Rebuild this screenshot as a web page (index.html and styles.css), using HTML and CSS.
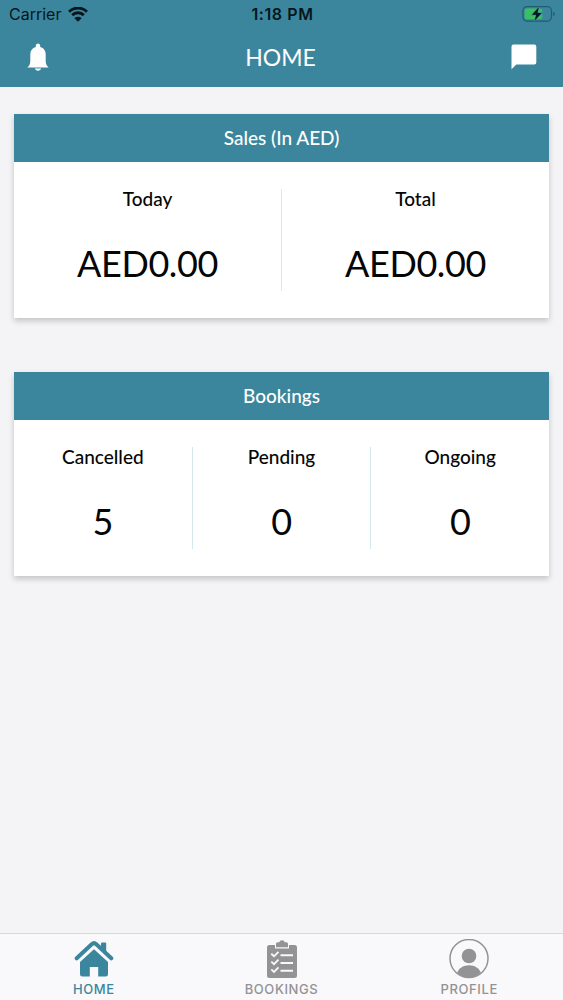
FILE: index.html
```
<!DOCTYPE html>
<html lang="en">
<head>
    <meta charset="UTF-8">
    <meta name="viewport" content="width=device-width, initial-scale=1.0">
    <title>Home</title>
    <link rel="stylesheet" href="styles.css">
</head>
<body>
    <header class="header">
        <!-- Status bar -->
        <div class="status-bar">
            <div class="carrier">
                <span>Carrier</span>
                <svg width="20" height="15" viewBox="0 0 20 15">
                    <path d="M1 4.800a12.700 12.700 0 0 1 18 0M4.200 8.100a8.200 8.200 0 0 1 11.600 0" fill="none" stroke="#06161b" stroke-width="2.900"/>
                    <path d="M10 14.800L6.400 11.200a5.200 5.200 0 0 1 7.200 0z" fill="#06161b"/>
                </svg>
            </div>
            <span class="time">1:18 PM</span>
            <svg class="battery" width="34" height="16" viewBox="0 0 34 16">
                <rect x=".9" y=".7" width="28.6" height="14.4" rx="4" fill="none" stroke="#245a72" stroke-width="1.2"/>
                <path d="M31.2 5.8v4.4q1.6-.6 1.6-2.2t-1.600-2.200z" fill="#245a72"/>
                <rect x="2.7" y="2.500" width="17.500" height="10.800" rx="2" fill="#38c160"/>
                <path d="M16.8 1.2L10 8.8h4.3l-1.6 5.8 7-7.7h-4.3z" fill="#06161b" stroke="#3b879e" stroke-width="1.2" paint-order="stroke"/>
            </svg>
        </div>

        <!-- Navigation bar -->
        <div class="nav-bar">
            <svg width="24" height="30" viewBox="0 0 24 30">
                <path d="M12 1.5c1.3 0 2.2 1 2.2 2.2v1.4c3.6.9 5.5 3.8 5.5 7.4v6.2c0 3.4 1 5.2 3 6.8H1.3c2-1.6 3-3.4 3-6.8v-6.2c0-3.6 1.9-6.5 5.5-7.4V3.700c0-1.200.9-2.200 2.200-2.200zM8.900 26.600h6.200c-.4 1.300-1.600 2.200-3.100 2.200s-2.700-.9-3.100-2.200z" fill="#fff"/>
            </svg>
            <h1>HOME</h1>
            <svg width="26" height="26" viewBox="0 0 26 26">
                <path d="M2.500.5h20.800a2 2 0 0 1 2 2v16a2 2 0 0 1-2 2H5.300L.5 25.300V2.500a2 2 0 0 1 2-2z" fill="#fff"/>
            </svg>
        </div>
    </header>

    <main>
        <!-- Sales -->
        <section class="card">
            <h2>Sales (In AED)</h2>
            <div class="stats">
                <div class="stat">
                    <h3>Today</h3>
                    <p>AED0.00</p>
                </div>
                <div class="stat">
                    <h3>Total</h3>
                    <p>AED0.00</p>
                </div>
            </div>
        </section>

        <!-- Bookings -->
        <section class="card">
            <h2>Bookings</h2>
            <div class="stats">
                <div class="stat">
                    <h3>Cancelled</h3>
                    <p>5</p>
                </div>
                <div class="stat">
                    <h3>Pending</h3>
                    <p>0</p>
                </div>
                <div class="stat">
                    <h3>Ongoing</h3>
                    <p>0</p>
                </div>
            </div>
        </section>
    </main>

    <!-- Tab bar -->
    <nav class="tab-bar">
        <a class="tab active">
            <svg width="40" height="40" viewBox="0 0 40 40">
                <path d="M27 4.500a1 1 0 0 1 1-1h3.200a1 1 0 0 1 1 1v9L27 8.500z" fill="currentColor"/>
                <path d="M2.700 19.300L17.700 5.200q2.300-2.100 4.600 0l15 14.100" fill="none" stroke="currentColor" stroke-width="4" stroke-linecap="round" stroke-linejoin="round"/>
                <path d="M20 10.200L34 23v12a2.500 2.500 0 0 1-2.500 2.500H24.200v-9.500h-8.400v9.500H8.500A2.500 2.500 0 0 1 6 35V23z" fill="currentColor"/>
            </svg>
            <span>HOME</span>
        </a>
        <a class="tab">
            <svg width="40" height="40" viewBox="0 0 40 40">
                <path d="M7.500 6H13v3.500h14V6h5.500A2.500 2.500 0 0 1 35 8.500v28a2.500 2.500 0 0 1-2.500 2.500h-25A2.500 2.500 0 0 1 5 36.500v-28A2.500 2.500 0 0 1 7.500 6z" fill="currentColor"/>
                <path d="M14 8.300V4.800a1.500 1.500 0 0 1 1.500-1.500h1.700a2.900 2.900 0 0 1 5.600 0h1.700A1.500 1.500 0 0 1 26 4.800v3.500z" fill="currentColor"/>
                <path d="M9.300 14.800l2.700 2.500 4.500-4.500M9.300 22.600l2.700 2.500 4.500-4.500M9.300 30.400l2.700 2.500 4.500-4.500M18.500 16.200H31M18.500 24H31M18.500 31.800H31" fill="none" stroke="#f9f8fa" stroke-width="1.900"/>
            </svg>
            <span>BOOKINGS</span>
        </a>
        <a class="tab">
            <svg width="40" height="40" viewBox="0 0 40 40">
                <circle cx="20" cy="19.500" r="19" fill="none" stroke="currentColor" stroke-width="1.500"/>
                <circle cx="20" cy="17" r="7.300" fill="currentColor"/>
                <path d="M8.200 33.700C10 29 14.500 26.300 20 26.300s10 2.700 11.800 7.400A18.500 18.500 0 0 1 20 38.500a18.500 18.500 0 0 1-11.800-4.800z" fill="currentColor"/>
            </svg>
            <span>PROFILE</span>
        </a>
    </nav>
</body>
</html>
```
FILE: styles.css
```
* {
    box-sizing: border-box;
}

body {
    display: flex;
    flex-direction: column;
    height: 1000px;
    margin: 0;
    background-color: #f4f3f5;
    font-family: Lato, sans-serif;
    color: #050505;
}

h1, h2, h3, p {
    margin: 0;
}

svg {
    display: block;
}

/* Header */
.header {
    height: 87px;
    background-color: #3b869d;
}

.status-bar {
    display: grid;
    grid-template-columns: 1fr auto 1fr;
    align-items: center;
    height: 28px;
    padding: 0 7px 0 9px;
    font-family: Inter, sans-serif;
    font-size: 16px;
    color: #06161b;
}

.carrier {
    display: flex;
    align-items: center;
    gap: 7px;
}

.time {
    font-weight: 600;
    letter-spacing: 0.6px;
}

.battery {
    justify-self: end;
}

.nav-bar {
    display: flex;
    justify-content: space-between;
    align-items: center;
    height: 57px;
    padding: 0 26px;
}

.nav-bar h1 {
    font-size: 23px;
    font-weight: 400;
    color: #fff;
}

/* Cards */
main {
    flex: 1;
    display: flex;
    flex-direction: column;
    gap: 54px;
    padding: 27px 14px;
}

.card {
    height: 204px;
    background-color: #fff;
    box-shadow: 0 3px 6px rgba(0, 0, 0, 0.2);
}

.card h2 {
    height: 48px;
    background-color: #3b869d;
    color: #fff;
    font-size: 19px;
    font-weight: 500;
    line-height: 48px;
    text-align: center;
}

.stats {
    display: flex;
    padding: 27px 0;
}

.stat {
    flex: 1;
    height: 102px;
    text-align: center;
}

.stat + .stat {
    border-left: 1px solid #d5e8f0;
}

.stat h3 {
    font-size: 19px;
    font-weight: 500;
    line-height: 20px;
}

.stat p {
    margin-top: 32px;
    font-size: 36px;
    line-height: 44px;
    letter-spacing: -0.4px;
}

/* Tab bar */
.tab-bar {
    display: flex;
    height: 67px;
    border-top: 1px solid #d8d7d9;
    background-color: #f9f8fa;
}

.tab {
    flex: 1;
    display: flex;
    flex-direction: column;
    align-items: center;
    padding-top: 5px;
    color: #939294;
    font-family: Inter, sans-serif;
    font-size: 13px;
    font-weight: 500;
    line-height: 20px;
    letter-spacing: 0.6px;
}

.tab.active {
    color: #3b869d;
}
```
